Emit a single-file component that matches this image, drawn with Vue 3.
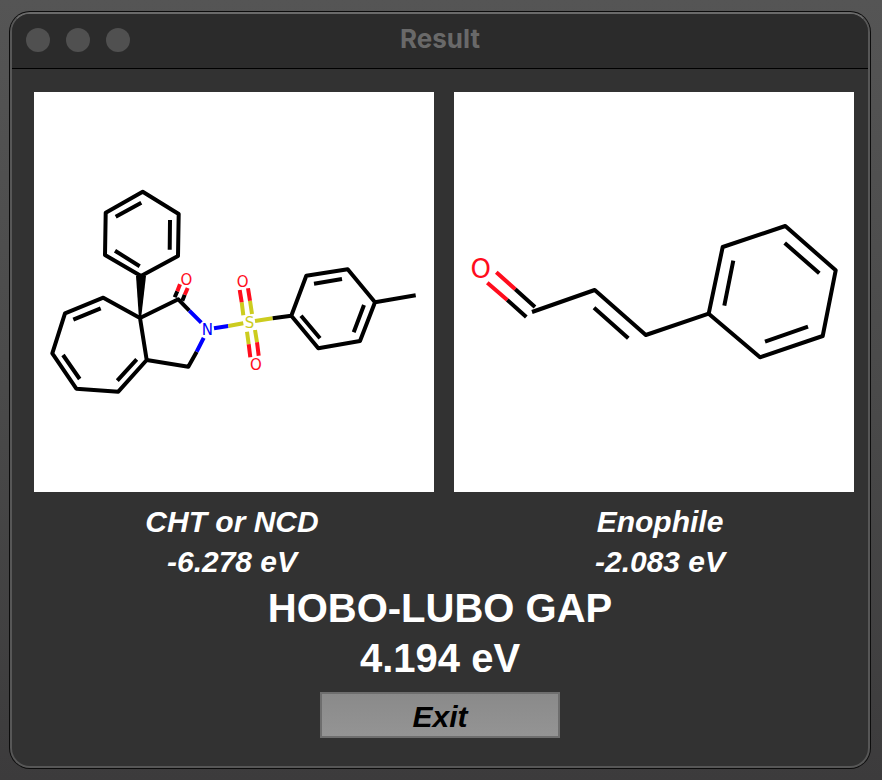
<script setup>
const gap = '4.194 eV'

const results = [
  {
    name: 'CHT or NCD',
    energy: '-6.278 eV',
    fontSize: 15,
    bonds: [
      // phenyl ring
      { color: 'carbon', d: 'M108.7 99.7L144.7 122L144 164L107 184L71 163L71.7 120.7ZM107.3 110.7L81.7 124.7M136 128L135.7 157.7M81 158.7L105.7 174.3' },
      // seven-membered ring
      { color: 'carbon', d: 'M106 226L69.3 205.7L31 221.3L18.3 261.3L42.3 296.7L84.3 299.7L112.7 268ZM66.7 216.3L39.3 227.7M29 263L45.7 287M102.7 267.3L83.3 288.7' },
      // lactam ring
      { color: 'carbon', d: 'M112.7 268L154.3 274.7L162.7 259.7M106 226L144.3 207.3L155.3 218.7' },
      { color: 'nitrogen', d: 'M162.7 259.7L169.7 245.8M155.3 218.7L167.3 230.7M180 236.3L194.3 234' },
      { color: 'carbon', d: 'M140.7 205.3L143.3 199.3M148.3 208.7L150.7 202.7' },
      { color: 'oxygen', d: 'M143.3 199.3L146 192.3M150.7 202.7L153.7 196' },
      // sulfonyl group
      { color: 'sulfur', d: 'M194.3 234L209.3 231.3M221 229L238.7 226.3M209.3 223.3L207.7 210.3M218 222L216 208.7M213 239.7L214.7 252.3M221 238L223 250.3' },
      { color: 'oxygen', d: 'M207.7 210.3L205.7 198M216 208.7L214 196.3M214.7 252.3L216.3 265.3M223 250.3L224.7 263.7' },
      // tolyl ring
      { color: 'carbon', d: 'M238.7 226.3L257.3 223.7M257.3 223.7L272.3 183.7L313.7 177.3L341 210.3L326 249L284.3 256.3ZM341 210.3L381.7 203.3M280 191.7L308 187M330 213L319.7 240.3M267 223.7L286 246.3' },
    ],
    wedge: '105,227 107,227 112,184 102,184',
    atoms: [
      { symbol: 'O', color: 'oxygen', x: 152.3, y: 192.5 },
      { symbol: 'N', color: 'nitrogen', x: 173.3, y: 243 },
      { symbol: 'S', color: 'sulfur', x: 215.5, y: 236 },
      { symbol: 'O', color: 'oxygen', x: 208.7, y: 194.5 },
      { symbol: 'O', color: 'oxygen', x: 222, y: 278 },
    ],
  },
  {
    name: 'Enophile',
    energy: '-2.083 eV',
    fontSize: 26,
    bonds: [
      { color: 'oxygen', d: 'M42.3 180.3L61.3 197.3M33.3 190.7L53.3 208' },
      { color: 'carbon', d: 'M61.3 197.3L81 215M53.3 208L72.3 225' },
      { color: 'carbon', d: 'M78 220L140.7 198L191.8 243L254.7 221.7M140 215.7L174.3 246.3' },
      { color: 'carbon', d: 'M254.7 221.7L268.7 155L331.3 134L381.7 178.3L368.7 244L306 265.3ZM279.3 168.7L270.3 213.7M330.7 151L365.3 181.3M311 249.7L354 234.7' },
    ],
    wedge: null,
    atoms: [{ symbol: 'O', color: 'oxygen', x: 26.7, y: 185.5 }],
  },
]
</script>

<template>
  <div class="desktop">
    <main class="window">
      <header class="titlebar">
        <div class="lights">
          <button class="light" type="button" aria-label="Close"></button>
          <button class="light" type="button" aria-label="Minimize"></button>
          <button class="light" type="button" aria-label="Zoom"></button>
        </div>
        <h1 class="title">Result</h1>
      </header>

      <div class="molecules">
        <svg
          v-for="r in results"
          :key="r.name"
          class="molecule"
          viewBox="0 0 400 400"
          role="img"
          :aria-label="r.name"
        >
          <path
            v-for="(b, i) in r.bonds"
            :key="i"
            :class="['bond', b.color]"
            :d="b.d"
          />
          <polygon v-if="r.wedge" :points="r.wedge" />
          <text
            v-for="(a, i) in r.atoms"
            :key="'a' + i"
            :class="['atom', a.color]"
            :x="a.x"
            :y="a.y"
            :font-size="r.fontSize"
          >{{ a.symbol }}</text>
        </svg>
      </div>

      <div class="captions">
        <div v-for="r in results" :key="r.name">
          <p class="caption">{{ r.name }}</p>
          <p class="caption">{{ r.energy }}</p>
        </div>
      </div>

      <section class="summary">
        <h2 class="headline">HOBO-LUBO GAP</h2>
        <p class="headline">{{ gap }}</p>
        <button class="exit" type="button">Exit</button>
      </section>
    </main>
  </div>
</template>

<style>
body {
  margin: 0;
}
</style>

<style scoped>
.desktop {
  box-sizing: border-box;
  min-height: 100vh;
  display: flex;
  padding: 12px 12px 12px 10px;
  background: linear-gradient(#555555, #4a4a4a 50%, #3c3b3c);
  font-family: "Liberation Sans", Arial, sans-serif;
}

.window {
  flex: 1;
  min-width: 0;
  border: 2px solid #575757;
  border-top-color: #6a6a6a;
  border-radius: 20px;
  box-shadow: 0 0 0 1px #0c0c0c;
  background: #323232;
  overflow: hidden;
}

.titlebar {
  display: grid;
  grid-template-columns: 1fr auto 1fr;
  align-items: center;
  height: 52px;
  padding: 0 14px 2px;
  border-bottom: 1px solid #000;
  background: #2b2b2b;
}

.lights {
  display: flex;
  gap: 16px;
}

.light {
  width: 24px;
  height: 24px;
  padding: 0;
  border: 0;
  border-radius: 50%;
  background: #505050;
}

.title {
  margin: 0;
  padding-bottom: 2px;
  color: #696969;
  font: 700 26px/32px Inter, sans-serif;
}

.molecules {
  display: grid;
  grid-template-columns: 1fr 1fr;
  gap: 20px;
  padding: 23px 14px 10px 22px;
}

.molecule {
  display: block;
  width: 100%;
  background: #fff;
}

.bond {
  fill: none;
  stroke: currentColor;
  stroke-width: 4;
  stroke-linejoin: round;
}

.atom {
  fill: currentColor;
  font-family: "DejaVu Sans", sans-serif;
  text-anchor: middle;
}

.carbon {
  color: #000;
}

.oxygen {
  color: #ff0d1d;
}

.nitrogen {
  color: #0000ff;
}

.sulfur {
  color: #cccc1f;
}

.captions {
  display: grid;
  grid-template-columns: 1fr 1fr;
  gap: 12px;
  padding-left: 12px;
  text-align: center;
}

.caption {
  margin: 0;
  color: #fff;
  font: italic 700 30px/40px "Liberation Sans", Arial, sans-serif;
}

.summary {
  display: flex;
  flex-direction: column;
  align-items: center;
  padding-top: 1px;
}

.headline {
  margin: 0;
  color: #fff;
  font-size: 40px;
  font-weight: 700;
  line-height: 50px;
}

.exit {
  width: 240px;
  height: 46px;
  margin: 9px 0 26px;
  padding: 4px 0 0;
  border: 2px solid #6e6e6e;
  background: linear-gradient(#8a8a8a, #949494);
  color: #000;
  font: italic 700 30px/38px "Liberation Sans", Arial, sans-serif;
}
</style>
